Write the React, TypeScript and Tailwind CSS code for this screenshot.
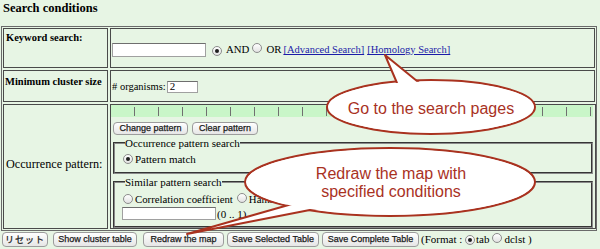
import React from "react";

function Radio({ checked }: { checked?: boolean }) {
  return (
    <span className="inline-flex w-[10px] h-[10px] shrink-0 items-center justify-center rounded-full border border-[#8c8c8c] bg-gradient-to-b from-white to-[#e2e2e2]">
      {checked && <span className="block w-[4px] h-[4px] rounded-full bg-[#1e1e1e]" />}
    </span>
  );
}

function Btn({ children, className }: { children: React.ReactNode; className: string }) {
  return (
    <span
      className={
        "inline-flex shrink-0 items-center justify-center rounded-[4px] border border-[#9c9c9c] bg-gradient-to-b from-white to-[#e6e6e6] font-['Liberation_Sans',sans-serif] text-[9px] leading-none text-[#1a1a1a] [-webkit-text-stroke:0.25px_#1a1a1a] " +
        className
      }
    >
      {children}
    </span>
  );
}

function TextBox({ className, value }: { className: string; value?: string }) {
  return (
    <span
      className={
        "inline-flex shrink-0 items-center border border-[#a0a0a0] border-t-[#6e6e6e] bg-white pl-[2px] text-[11px] leading-none " +
        className
      }
    >
      {value}
    </span>
  );
}

export default function App() {
  const ticks = Array.from({ length: 20 });
  return (
    <div className="relative w-[600px] h-[249px] overflow-hidden bg-[#e7f5e4] font-['Liberation_Serif',serif] text-[11px] text-black">
      <div className="h-[26px] pl-[3px] pt-[1px] text-[12.5px] font-bold leading-[14px]">Search conditions</div>

      <div className="ml-[1px] w-[596px] border border-[#6a6a6a] p-[1px] flex flex-col gap-[2px]">
        {/* Row 1 */}
        <div className="flex h-[40px] gap-[2px]">
          <div className="w-[105px] shrink-0 border border-[#4a4a4a] pl-[2px] pt-[3px] text-[10.5px] font-bold leading-[12px]">
            Keyword search:
          </div>
          <div className="flex flex-1 items-center border border-[#4a4a4a] pl-[1px] pt-[3px] text-[10.8px] leading-[13px]">
            <TextBox className="w-[94px] h-[14px]" />
            <span className="ml-[6px]"><Radio checked /></span>
            <span className="ml-[4px]">AND</span>
            <span className="ml-[3px]"><Radio /></span>
            <span className="ml-[4px]">OR</span>
            <span className="ml-[2px] text-[10.5px] text-[#1b1ba8] underline">[Advanced Search]</span>
            <span className="ml-[3px] text-[10.5px] text-[#1b1ba8] underline">[Homology Search]</span>
          </div>
        </div>

        {/* Row 2 */}
        <div className="flex h-[32px] gap-[2px]">
          <div className="w-[105px] shrink-0 border border-[#4a4a4a] pl-[1px] pt-[5px] text-[10.5px] font-bold leading-[12px] whitespace-nowrap">
            Minimum cluster size
          </div>
          <div className="flex flex-1 items-center border border-[#4a4a4a] pl-[1px] pt-[1px] text-[10.5px] leading-[13px]">
            <span>#&nbsp;organisms:</span>
            <TextBox className="ml-[1px] w-[31px] h-[12px]" value="2" />
          </div>
        </div>

        {/* Row 3 */}
        <div className="flex h-[125px] gap-[2px]">
          <div className="flex w-[105px] shrink-0 items-center border border-[#4a4a4a] pl-[2px] pb-[6px] text-[12.2px] leading-[14px]">
            Occurrence pattern:
          </div>
          <div className="flex flex-1 flex-col border border-[#4a4a4a] pr-[2px]">
            <div className="flex h-[12px] w-[482px] bg-[#c9f6c8]">
              {ticks.map((_, i) => (
                <div key={i} className="flex h-full w-[24px] shrink-0 items-center justify-end">
                  <div className="h-[9px] w-px bg-[#707070]" />
                </div>
              ))}
            </div>
            <div className="mt-[5px] ml-[2px] flex gap-[4px]">
              <Btn className="w-[75px] h-[13px]">Change pattern</Btn>
              <Btn className="w-[66px] h-[13px]">Clear pattern</Btn>
            </div>
            <fieldset className="mt-[2px] ml-[2px] h-[37px] border-2 border-[#8a8a8a] [border-style:groove] pl-[8px] pt-[4px]">
              <legend className="ml-[2px] px-0 text-[11px] leading-[12px]">Occurrence pattern search</legend>
              <div className="flex items-center leading-[12px]">
                <Radio checked />
                <span className="ml-[2px]">Pattern match</span>
              </div>
            </fieldset>
            <fieldset className="mt-[2px] ml-[2px] h-[52px] border-2 border-[#8a8a8a] [border-style:groove] pl-[8px] pt-[5px]">
              <legend className="ml-[2px] px-0 text-[11px] leading-[12px]">Similar pattern search</legend>
              <div className="flex items-center text-[10.8px] leading-[12px]">
                <Radio />
                <span className="ml-[2px]">Correlation coefficient</span>
                <span className="ml-[4px]"><Radio /></span>
                <span className="ml-[2px]">Hamming distance</span>
              </div>
              <div className="mt-[2px] -ml-[1px] flex items-center leading-[12px]">
                <TextBox className="w-[94px] h-[13px]" />
                <span className="ml-[1px]">(0 .. 1)</span>
              </div>
            </fieldset>
          </div>
        </div>
      </div>

      {/* Bottom row */}
      <div className="mt-[1px] flex h-[15px] items-center pl-[2px] leading-[13px]">
        <Btn className="w-[46px] h-[15px] font-['Noto_Sans_CJK_JP',sans-serif] tracking-[1px]">リセット</Btn>
        <Btn className="ml-[5px] w-[84px] h-[15px]">Show cluster table</Btn>
        <Btn className="ml-[6px] w-[81px] h-[15px]">Redraw the map</Btn>
        <Btn className="ml-[3px] w-[92px] h-[15px]">Save Selected Table</Btn>
        <Btn className="ml-[3px] w-[97px] h-[15px]">Save Complete Table</Btn>
        <span className="ml-[2px]">(Format :&nbsp;</span>
        <Radio checked />
        <span className="ml-[1px]">tab</span>
        <span className="ml-[3px]"><Radio /></span>
        <span className="ml-[2px]">dclst )</span>
      </div>

      {/* Callouts */}
      <svg className="pointer-events-none absolute left-0 top-0" width="600" height="249" viewBox="0 0 600 249">
        <g stroke="#a9321f" strokeWidth="2" fill="#ffffff" strokeLinejoin="round">
          <ellipse cx="431" cy="107" rx="104" ry="27" />
          <polygon points="385,55 400,90 428,90" />
          <ellipse cx="431" cy="107" rx="102.5" ry="25.5" stroke="none" />

          <ellipse cx="390" cy="182" rx="145" ry="34" />
          <polygon points="187,234 320,196 320,208" />
          <ellipse cx="390" cy="182" rx="143.5" ry="32.5" stroke="none" />
        </g>
        <g fill="#a9321f" fontFamily="'Liberation Sans', Arial, sans-serif" fontSize="16" textAnchor="middle">
          <text x="431" y="114">Go to the search pages</text>
          <text x="391" y="179">Redraw the map with</text>
          <text x="391" y="197">specified conditions</text>
        </g>
      </svg>
    </div>
  );
}
